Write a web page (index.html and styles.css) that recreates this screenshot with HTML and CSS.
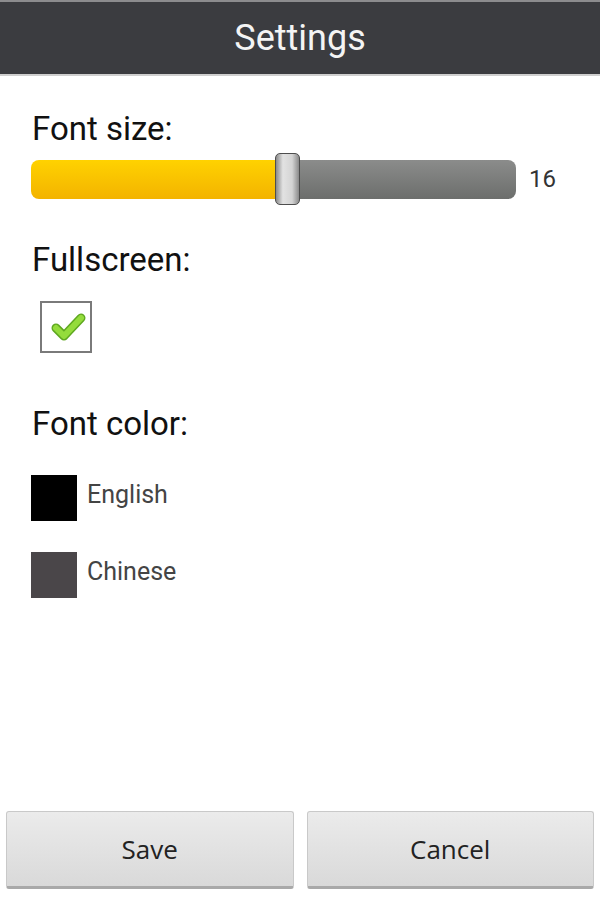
FILE: index.html
```html
<html>
<head>
<title>Settings</title>
<link rel="stylesheet" href="styles.css">
</head>
<body>
    <div class="header">Settings</div>

    <div class="content">
        <div class="label first">Font size:</div>
        <div class="sliderRow">
            <div class="slider">
                <div class="track">
                    <div class="filled"></div>
                    <div class="rest"></div>
                </div>
                <div class="thumb"></div>
            </div>
            <span class="value">16</span>
        </div>

        <div class="label second">Fullscreen:</div>
        <div class="checkbox">
            <svg width="48" height="48" viewBox="0 0 48 48">
                <polyline points="14,25 22,33 39,15" fill="none" stroke="#5fa820" stroke-width="9" stroke-linecap="round" stroke-linejoin="round"/>
                <polyline points="14,25 22,33 39,15" fill="none" stroke="#94dc3c" stroke-width="6" stroke-linecap="round" stroke-linejoin="round"/>
            </svg>
        </div>

        <div class="label third">Font color:</div>
        <div class="colorRow">
            <div class="swatch black"></div>
            <span class="colorName">English</span>
        </div>
        <div class="colorRow">
            <div class="swatch grey"></div>
            <span class="colorName">Chinese</span>
        </div>
    </div>

    <div class="footer">
        <button type="button" class="btn">Save</button>
        <button type="button" class="btn">Cancel</button>
    </div>
</body>
</html>
```

FILE: styles.css
```css
body {
    margin: 0;
    width: 600px;
    height: 900px;
    display: flex;
    flex-direction: column;
    background-color: white;
    font-family: Roboto, "Liberation Sans", sans-serif;}
.header {
    height: 72px;
    border-top: 2px solid #8c8c8e;
    border-bottom: 2px solid #cfcfcf;
    background-color: #3b3c40;
    color: #f4f4f4;
    font-size: 36px;
    line-height: 72px;
    text-align: center;}
.content {
    padding: 0 31px;}
.label {
    font-size: 33px;
    line-height: 32px;
    color: #111;
    padding-left: 1px;}
.first {margin-top: 37px;}
.second {margin-top: 39px;}
.third {margin-top: 55px;}
.sliderRow {
    display: flex;
    align-items: center;
    gap: 13px;
    margin-top: 8px;
    height: 52px;}
.slider {
    position: relative;
    width: 485px;
    height: 52px;
    display: flex;
    align-items: center;}
.track {
    display: flex;
    width: 100%;
    height: 39px;
    border-radius: 8px;
    overflow: hidden;}
.filled {
    width: 250px;
    background: linear-gradient(#ffd200, #f3b300);}
.rest {
    flex: 1;
    background: linear-gradient(#8b8c8b, #6c6e6c);}
.thumb {
    position: absolute;
    left: 244px;
    top: 0;
    width: 23px;
    height: 50px;
    border: 1px solid #4e4e4e;
    border-radius: 5px;
    background: linear-gradient(to right, #8a8a8a, #e2e2e2 30%, #d4d4d4 70%, #8a8a8a);}
.value {
    font-size: 24px;
    color: #333;}
.checkbox {
    margin: 25px 0 0 9px;
    width: 48px;
    height: 48px;
    border: 2px solid #7a7a7a;
    background-color: white;}
.checkbox svg {display: block;}
.colorRow {
    display: flex;
    align-items: center;
    gap: 10px;
    height: 46px;
    margin-top: 31px;}
.third + .colorRow {margin-top: 35px;}
.swatch {
    width: 46px;
    height: 46px;}
.black {background-color: #000;}
.grey {background-color: #4a4649;}
.colorName {
    font-size: 25px;
    color: #444;
    padding-bottom: 8px;}
.footer {
    margin-top: auto;
    display: flex;
    gap: 13px;
    padding: 0 6px 11px 6px;}
.btn {
    flex: 1;
    height: 78px;
    border: 1px solid #c9c9c9;
    border-bottom: 3px solid #a9a9a9;
    border-radius: 3px;
    background: linear-gradient(#ebebeb, #d9d9d9);
    font-family: "Open Sans", Roboto, sans-serif;
    font-size: 26px;
    color: #222;}
```
